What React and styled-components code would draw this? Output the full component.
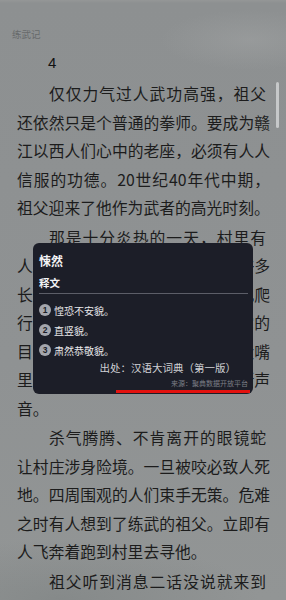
import React from "react";
import styled, { createGlobalStyle } from "styled-components";

const paragraphs = [
  [
    "仅仅力气过人武功高强，祖父",
    "还依然只是个普通的拳师。要成为赣",
    "江以西人们心中的老座，必须有人人",
    "信服的功德。20世纪40年代中期，",
    "祖父迎来了他作为武者的高光时刻。",
  ],
  [
    "那是十分炎热的一天，村里有",
    "人发现一条很大的眼镜蛇，引来许多",
    "长约两米的毒蛇昂首吐信，四处乱爬",
    "行人纷纷躲避。村民围住了它，它的",
    "目光凶狠，颈部高高鼓起，张开大嘴",
    "里不停地发出令人毛骨悚然的嘶嘶声",
    "音。",
  ],
  [
    "杀气腾腾、不肯离开的眼镜蛇",
    "让村庄涉身险境。一旦被咬必致人死",
    "地。四周围观的人们束手无策。危难",
    "之时有人想到了练武的祖父。立即有",
    "人飞奔着跑到村里去寻他。",
  ],
  ["祖父听到消息二话没说就来到"],
];

const meanings = ["惶恐不安貌。", "直竖貌。", "肃然恭敬貌。"];

function App() {
  return (
    <>
      <GlobalStyle />
      <Page>
        <BookTitle>练武记</BookTitle>
        <ChapterNo>4</ChapterNo>
        <Body>
          {paragraphs.map((lines, i) => (
            <Paragraph key={i}>
              {lines.map((line, j) => (
                <Line
                  key={j}
                  $first={j === 0}
                  $last={j === lines.length - 1 && i !== paragraphs.length - 1}
                >
                  {line}
                </Line>
              ))}
            </Paragraph>
          ))}
        </Body>
        <ScrollThumb />

        <Popup>
          <Word>悚然</Word>
          <SectionLabel>释文</SectionLabel>
          <Divider />
          <MeaningList>
            {meanings.map((m, i) => (
              <Meaning key={i}>
                <Num>{i + 1}</Num>
                <span>{m}</span>
              </Meaning>
            ))}
          </MeaningList>
          <SourceBook>出处：汉语大词典（第一版）</SourceBook>
          <Provider>来源：聚典数据开放平台</Provider>
          <RedMark />
        </Popup>
      </Page>
    </>
  );
}

export default App;

const GlobalStyle = createGlobalStyle`
  body {
    margin: 0;
    background: #8f9293;
  }
`;

const Page = styled.div`
  position: relative;
  width: 286px;
  height: 600px;
  overflow: hidden;
  padding-top: 28px;
  box-sizing: border-box;
  font-family: "Noto Sans CJK SC", "Noto Sans", sans-serif;
  background:
    radial-gradient(ellipse 90px 30px at 250px 40px, rgba(170, 172, 172, 0.35), transparent),
    radial-gradient(ellipse 200px 60px at 60px 600px, rgba(110, 116, 116, 0.35), transparent),
    linear-gradient(180deg, #959797 0px, #8d9091 3px, #8f9293 60%, #929595 100%);
`;

const BookTitle = styled.div`
  margin-left: 12px;
  font-size: 9.5px;
  line-height: 12px;
  color: #676a6b;
`;

const ChapterNo = styled.div`
  margin: 13px 0 0 48px;
  font-family: "Liberation Sans", "Noto Sans", sans-serif;
  font-size: 15px;
  line-height: 20px;
  color: #121212;
`;

const Body = styled.div`
  margin: 7px 0 0 17px;
  width: 253px;
  font-size: 15.8px;
  line-height: 28.5px;
  color: #1c1c1c;
`;

const Paragraph = styled.div`
  margin-bottom: 1px;
`;

const Line = styled.div`
  white-space: nowrap;
  text-align: justify;
  text-align-last: ${(p) => (p.$last ? "left" : "justify")};
  padding-left: ${(p) => (p.$first ? "32px" : "0")};
  margin-right: ${(p) => (p.$first ? "4px" : "0")};
`;

const ScrollThumb = styled.div`
  position: absolute;
  left: 276px;
  top: 82px;
  width: 3px;
  height: 46px;
  border-radius: 2px;
  background: #c6c8c9;
`;

const Popup = styled.div`
  position: absolute;
  left: 33px;
  top: 243px;
  width: 220px;
  height: 151px;
  box-sizing: border-box;
  padding: 8px 5px 0 6px;
  border-radius: 6px;
  background: #1c1e28;
  color: #f2f2f4;
`;

const Word = styled.div`
  font-size: 12px;
  font-weight: 700;
  line-height: 20px;
`;

const SectionLabel = styled.div`
  margin-top: 4px;
  font-size: 10.5px;
  font-weight: 700;
  line-height: 16px;
`;

const Divider = styled.div`
  margin-top: 2px;
  height: 1px;
  background: #5c5e68;
`;

const MeaningList = styled.div`
  margin-top: 6px;
  display: flex;
  flex-direction: column;
`;

const Meaning = styled.div`
  display: flex;
  align-items: center;
  gap: 3px;
  height: 20px;
  font-size: 10px;
  color: #e8e8ea;
`;

const Num = styled.span`
  display: flex;
  align-items: center;
  justify-content: center;
  width: 12px;
  height: 12px;
  border-radius: 50%;
  background: #a4a6ad;
  color: #1c1e28;
  font-family: "Liberation Sans", sans-serif;
  font-size: 8.5px;
  font-weight: 700;
`;

const SourceBook = styled.div`
  margin-right: 12px;
  text-align: right;
  font-size: 10.5px;
  line-height: 16px;
  color: #cfd0d4;
`;

const Provider = styled.div`
  margin-top: 1px;
  text-align: right;
  font-size: 7px;
  line-height: 12px;
  color: #7c7e87;
`;

const RedMark = styled.div`
  position: absolute;
  left: 83px;
  right: 3px;
  bottom: 1px;
  height: 3px;
  background: #e3120f;
`;
